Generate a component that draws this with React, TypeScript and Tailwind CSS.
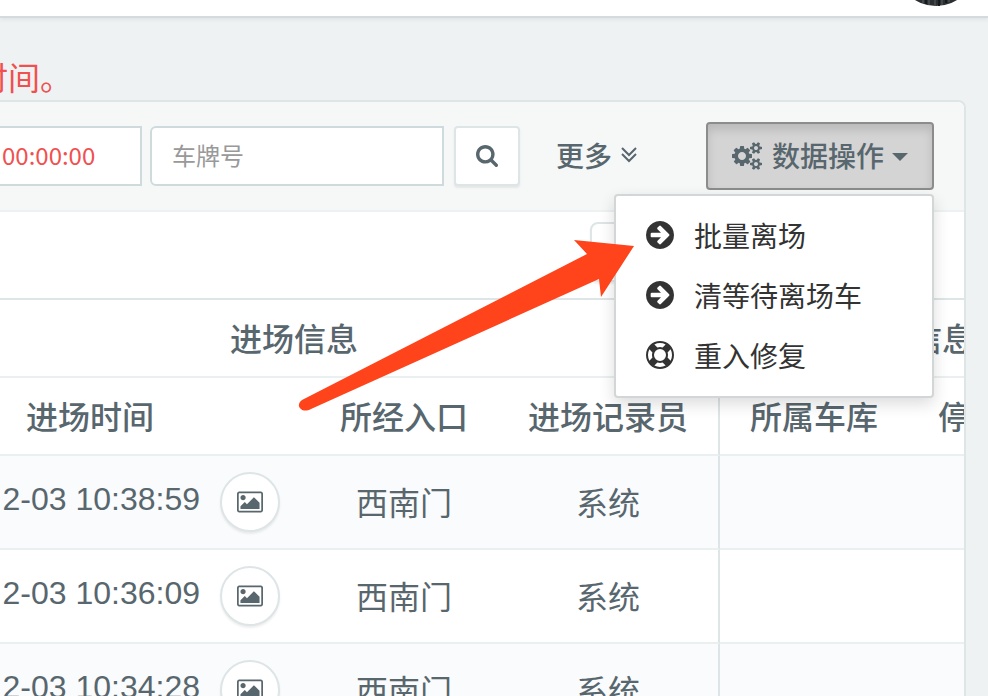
import React, { useState } from 'react';

interface IconProps {
  path: string;
  viewBox?: string;
  className?: string;
}

interface EntryRecord {
  time: string;
  gate: string;
  recorder: string;
}

const ICONS = {
  search:
    'M1216 832q0-185-131.5-316.5t-316.5-131.5-316.5 131.5-131.5 316.5 131.5 316.5 316.5 131.5 316.5-131.5 131.5-316.5zm512 832q0 52-38 90t-90 38q-54 0-90-38l-343-342q-179 124-399 124-143 0-273.5-55.5t-225-150-150-225-55.5-273.5 55.5-273.5 150-225 225-150 273.5-55.5 273.5 55.5 225 150 150 225 55.5 273.5q0 220-124 399l343 343q37 37 37 90z',
  arrowCircle:
    'M1413 896q0-27-18-45l-91-91-362-362q-18-18-45-18t-45 18l-91 91q-18 18-18 45t18 45l189 189h-502q-26 0-45 19t-19 45v128q0 26 19 45t45 19h502l-189 189q-19 19-19 45t19 45l91 91q18 18 45 18t45-18l362-362 91-91q18-18 18-45zm251 0q0 209-103 385.5t-279.5 279.5-385.5 103-385.5-103-279.5-279.5-103-385.5 103-385.5 279.5-279.5 385.5-103 385.5 103 279.5 279.5 103 385.5z',
  lifeRing:
    'M896 0q182 0 348 71t286 191 191 286 71 348-71 348-191 286-286 191-348 71-348-71-286-191-191-286-71-348 71-348 191-286 286-191 348-71zm0 128q-190 0-361 90l194 194q82-28 167-28t167 28l194-194q-171-90-361-90zm-678 1129l194-194q-28-82-28-167t28-167l-194-194q-90 171-90 361t90 361zm678 407q190 0 361-90l-194-194q-82 28-167 28t-167-28l-194 194q171 90 361 90zm0-384q159 0 271.5-112.5t112.5-271.5-112.5-271.5-271.5-112.5-271.5 112.5-112.5 271.5 112.5 271.5 271.5 112.5zm484-217l194 194q90-171 90-361t-90-361l-194 194q28 82 28 167t-28 167z',
  picture:
    'M576 576q0 80-56 136t-136 56-136-56-56-136 56-136 136-56 136 56 56 136zm1024 384v448h-1408v-192l320-320 160 160 512-512zm96-704h-1600q-13 0-22.5 9.5t-9.5 22.5v1216q0 13 9.5 22.5t22.5 9.5h1600q13 0 22.5-9.5t9.5-22.5v-1216q0-13-9.5-22.5t-22.5-9.5zm160 32v1216q0 66-47 113t-113 47h-1600q-66 0-113-47t-47-113v-1216q0-66 47-113t113-47h1600q66 0 113 47t47 113z',
  cogs:
    'M832 896q0-106-75-181t-181-75-181 75-75 181 75 181 181 75 181-75 75-181zm768 512q0-52-38-90t-90-38-90 38-38 90q0 53 37.5 90.5t90.5 37.5 90.5-37.5 37.5-90.5zm0-1024q0-52-38-90t-90-38-90 38-38 90q0 53 37.5 90.5t90.5 37.5 90.5-37.5 37.5-90.5zm-384 421v185q0 10-7 19.5t-16 10.5l-155 24q-11 35-32 76 34 48 90 115 7 11 7 20 0 12-7 19-23 30-82.5 89.5t-78.5 59.5q-11 0-21-7l-115-90q-37 19-77 31-11 108-23 155-7 24-30 24h-186q-11 0-20-7.5t-10-17.5l-23-153q-34-10-75-31l-118 89q-7 7-20 7-11 0-21-8-144-133-144-160 0-9 7-19 10-14 41-53t47-61q-23-44-35-82l-152-24q-10-1-17-9.5t-7-19.5v-185q0-10 7-19.5t16-10.5l155-24q11-35 32-76-34-48-90-115-7-11-7-20 0-12 7-20 22-30 82-89t79-59q11 0 21 7l115 90q34-18 77-32 11-108 23-154 7-24 30-24h186q11 0 20 7.5t10 17.5l23 153q34 10 75 31l118-89q8-7 20-7 11 0 21 8 144 133 144 160 0 8-7 19-12 16-42 54t-45 60q23 48 34 82l152 23q10 2 17 10.5t7 19.5zm640 533v140q0 16-149 31-12 27-30 52 51 113 51 138 0 4-4 7-122 71-124 71-8 0-46-47t-52-68q-20 2-30 2t-30-2q-14 21-52 68t-46 47q-2 0-124-71-4-3-4-7 0-25 51-138-18-25-30-52-149-15-149-31v-140q0-16 149-31 13-29 30-52-51-113-51-138 0-4 4-7 4-2 35-20t59-34 30-16q8 0 46 46.5t52 67.5q20-2 30-2t30 2q51-71 92-112l6-2q4 0 124 70 4 3 4 7 0 25-51 138 17 23 30 52 149 15 149 31zm0-1024v140q0 16-149 31-12 27-30 52 51 113 51 138 0 4-4 7-122 71-124 71-8 0-46-47t-52-68q-20 2-30 2t-30-2q-14 21-52 68t-46 47q-2 0-124-71-4-3-4-7 0-25 51-138-18-25-30-52-149-15-149-31v-140q0-16 149-31 13-29 30-52-51-113-51-138 0-4 4-7 4-2 35-20t59-34 30-16q8 0 46 46.5t52 67.5q20-2 30-2t30 2q51-71 92-112l6-2q4 0 124 70 4 3 4 7 0 25-51 138 17 23 30 52 149 15 149 31z',
};

const records: EntryRecord[] = [
  { time: '2-03 10:38:59', gate: '西南门', recorder: '系统' },
  { time: '2-03 10:36:09', gate: '西南门', recorder: '系统' },
  { time: '2-03 10:34:28', gate: '西南门', recorder: '系统' },
];

const menuItems = [
  { label: '批量离场', path: ICONS.arrowCircle, viewBox: '128 128 1536 1536' },
  { label: '清等待离场车', path: ICONS.arrowCircle, viewBox: '128 128 1536 1536' },
  { label: '重入修复', path: ICONS.lifeRing, viewBox: '0 0 1792 1792' },
];

const Icon: React.FC<IconProps> = ({ path, viewBox = '0 0 1792 1792', className }) => (
  <svg viewBox={viewBox} className={className} fill="currentColor" aria-hidden="true">
    <path d={path} />
  </svg>
);

const Header: React.FC = () => (
  <header className="relative flex h-[18px] items-end justify-end border-b-2 border-[#d5dadc] bg-white pr-3 shadow-[0_2px_4px_rgba(0,0,0,0.06)]">
    <div className="flex h-4 items-end overflow-hidden pb-[10px]">
      <svg viewBox="0 0 80 80" className="size-20 shrink-0" aria-hidden="true">
        <circle cx="40" cy="40" r="40" fill="#2b2f31" />
        <path d="M27 70v7M33 70v9M39 72v8M46 70v9M53 70v6" stroke="#4a5254" strokeWidth="1.5" />
        <path d="M30 70v8M43 71v9M50 70v7" stroke="#15191b" strokeWidth="2" />
      </svg>
    </div>
  </header>
);

const ActionMenu: React.FC = () => {
  const [open, setOpen] = useState(true);

  return (
    <div className="relative ml-auto">
      <button
        type="button"
        aria-expanded={open}
        onClick={() => setOpen(!open)}
        className="flex h-[68px] w-[228px] items-center rounded-sm border-2 border-[#8c8c8c] bg-[#d4d4d4] pl-6 text-[28px] font-medium shadow-[inset_0_6px_10px_rgba(0,0,0,0.125)]"
      >
        <Icon path={ICONS.cogs} viewBox="-64 0 1920 1792" className="mr-[10px] h-7 w-[30px]" />
        <span className="pb-[2px]">数据操作</span>
        <svg viewBox="0 0 16 8" className="mt-[2px] ml-2 h-2 w-4" fill="currentColor" aria-hidden="true">
          <path d="M0 0h16L8 8z" />
        </svg>
      </button>
      {open && (
        <ul className="absolute top-full right-0 z-10 mt-1 w-[320px] rounded-sm border-2 border-[#d3d6d6] bg-white py-[10px] text-[28px] text-[#333] shadow-[0_6px_16px_rgba(0,0,0,0.14)]">
          {menuItems.map(item => (
            <li key={item.label}>
              <a href="#" className="flex h-[60px] items-center gap-5 px-[30px] pb-[2px]">
                <Icon path={item.path} viewBox={item.viewBox} className="size-7" />
                {item.label}
              </a>
            </li>
          ))}
        </ul>
      )}
    </div>
  );
};

const Toolbar: React.FC = () => (
  <div className="flex h-[110px] items-center rounded-tr-md border-b-2 border-[#edf1f2] bg-[#f6f8f8] pr-[30px]">
    <input
      type="text"
      aria-label="时间"
      defaultValue="00:00:00"
      className="h-[60px] w-[142px] border-2 border-l-0 border-[#cfdadd] bg-white pb-1 pl-[2px] text-2xl text-[#f05050]"
    />
    <input
      type="text"
      aria-label="车牌号"
      placeholder="车牌号"
      className="ml-2 h-[60px] w-[294px] rounded-l-md border-2 border-[#cfdadd] bg-white px-5 pb-1 text-2xl placeholder:text-[#999]"
    />
    <button
      type="button"
      aria-label="搜索"
      className="ml-[10px] flex h-[60px] w-[66px] items-center justify-center rounded-sm border-2 border-[#dee5e7] bg-white shadow-[0_2px_2px_rgba(90,90,90,0.1)]"
    >
      <Icon path={ICONS.search} viewBox="64 128 1664 1664" className="size-[22px]" />
    </button>
    <button type="button" className="ml-9 flex items-center gap-2 pb-[2px] text-[28px] font-medium">
      更多
      <svg viewBox="0 0 18 16" className="h-4 w-[18px]" fill="none" stroke="currentColor" strokeWidth="2" aria-hidden="true">
        <path d="M2 1l7 7 7-7M2 7l7 7 7-7" />
      </svg>
    </button>
    <ActionMenu />
  </div>
);

const RecordTable: React.FC = () => (
  <table className="-ml-[130px] w-[1294px] table-fixed border-separate border-spacing-0 text-center text-[32px] leading-10">
    <colgroup>
      <col className="w-[440px]" />
      <col className="w-[188px]" />
      <col className="w-[222px]" />
      <col className="w-[188px]" />
      <col className="w-[256px]" />
    </colgroup>
    <thead>
      <tr className="h-[80px]">
        <th colSpan={3} className="border-y-2 border-r-2 border-t-[#dee5e7] border-r-[#dee5e7] border-b-[#eaeff0] pb-[2px] font-medium">
          进场信息
        </th>
        <th colSpan={2} className="border-y-2 border-t-[#dee5e7] border-b-[#eaeff0] pb-[2px] font-medium">
          信息
        </th>
      </tr>
      <tr className="h-[78px]">
        <th className="border-b-2 border-[#eaeff0] pb-[2px] font-medium">进场时间</th>
        <th className="border-b-2 border-[#eaeff0] pb-[2px] font-medium">所经入口</th>
        <th className="border-r-2 border-b-2 border-r-[#dee5e7] border-b-[#eaeff0] pb-[2px] font-medium">进场记录员</th>
        <th className="border-b-2 border-[#eaeff0] pb-[2px] font-medium">所属车库</th>
        <th className="border-b-2 border-[#eaeff0] pb-[2px] pl-[30px] text-left font-medium">停</th>
      </tr>
    </thead>
    <tbody>
      {records.map(record => (
        <tr key={record.time} className="h-[94px] odd:bg-[#fafbfc]">
          <td className="border-b-2 border-[#eaeff0]">
            <div className="flex items-center justify-end gap-5 pr-[30px]">
              <span className="pb-[6px] font-['Liberation_Sans',sans-serif]">{record.time}</span>
              <button
                type="button"
                aria-label="查看图片"
                className="flex size-[60px] items-center justify-center rounded-full border-2 border-[#dee5e7] bg-white shadow-[0_2px_2px_rgba(90,90,90,0.1)]"
              >
                <Icon path={ICONS.picture} viewBox="-64 0 1920 1792" className="size-[26px]" />
              </button>
            </div>
          </td>
          <td className="border-b-2 border-[#eaeff0] pb-[2px]">{record.gate}</td>
          <td className="border-r-2 border-b-2 border-r-[#dee5e7] border-b-[#eaeff0] pb-[2px]">{record.recorder}</td>
          <td className="border-b-2 border-[#eaeff0]" />
          <td className="border-b-2 border-[#eaeff0]" />
        </tr>
      ))}
    </tbody>
  </table>
);

// hand-drawn pointer towards the first menu entry
const Pointer: React.FC = () => (
  <svg
    viewBox="0 0 340 180"
    className="pointer-events-none absolute top-[236px] left-[298px] z-20 h-[180px] w-[340px]"
    fill="#ff431b"
    aria-hidden="true"
  >
    <path d="M336 10L276 4l13 14L4 164c-4 3-4 7-1 9 2 2 6 2 10 0L301 43l2 18z" />
  </svg>
);

const App: React.FC = () => {
  return (
    <div className="relative h-screen overflow-hidden bg-[#eef2f3] font-['Noto_Sans_CJK_SC',sans-serif] text-[#58666e]">
      <Header />
      <main className="pr-[22px]">
        <p className="-ml-6 pt-[38px] pb-1 text-[32px] leading-10 text-[#f05050]">时间。</p>
        <section className="rounded-tr-lg border-t-2 border-r-2 border-[#dee5e7] bg-white">
          <Toolbar />
          <div className="flex h-[86px] items-start pt-[10px] pl-[590px]">
            <button
              type="button"
              aria-label="导出"
              className="h-[60px] w-[120px] rounded-lg border-2 border-[#dee5e7] bg-white shadow-[0_2px_2px_rgba(90,90,90,0.1)]"
            />
          </div>
          <div className="overflow-hidden">
            <RecordTable />
          </div>
        </section>
      </main>
      <Pointer />
    </div>
  );
};

export default App;
